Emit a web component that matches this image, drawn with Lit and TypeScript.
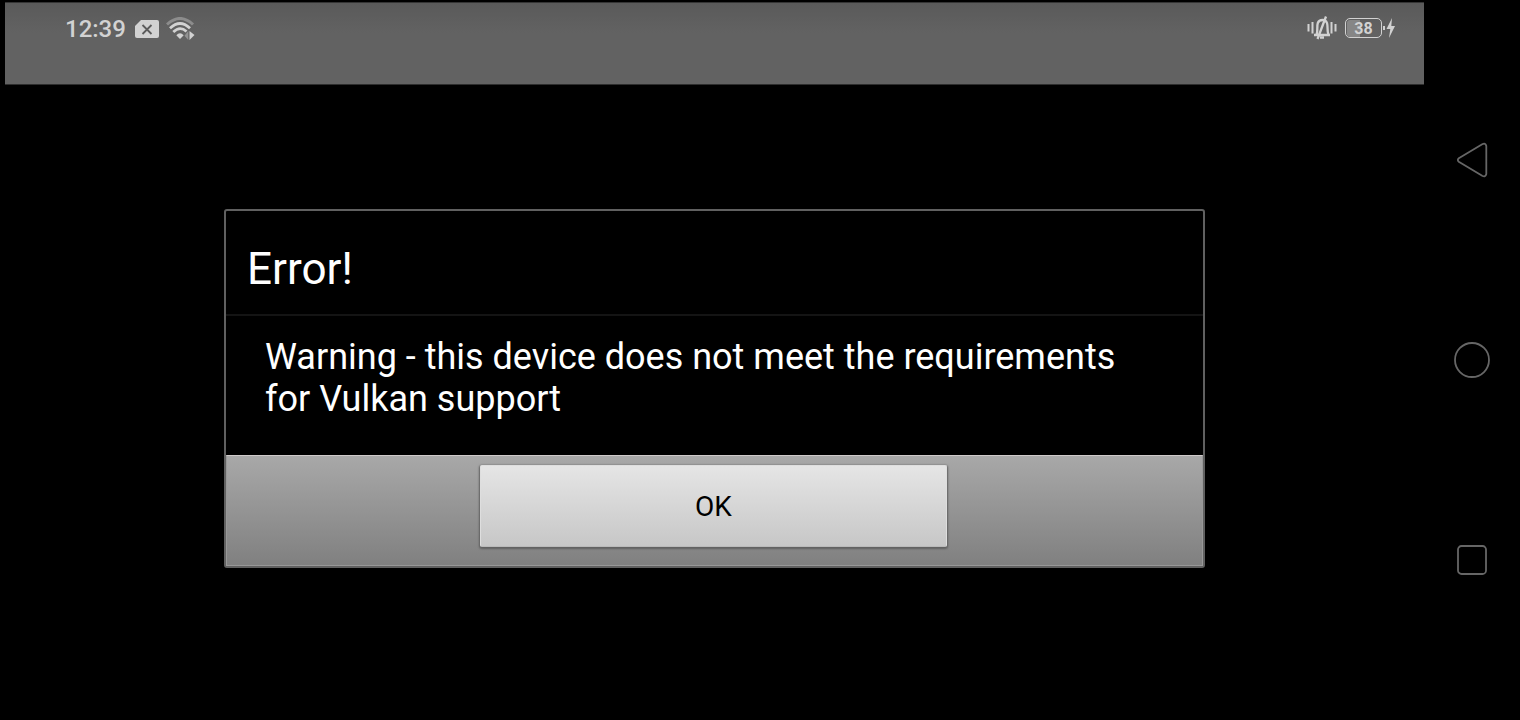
import { LitElement, html, css } from "lit";
import { customElement, property, state } from "lit/decorators.js";

@customElement("status-bar")
class StatusBar extends LitElement {
  @property() time = "";
  @property({ type: Number }) battery = 0;

  static styles = css`
    :host {
      display: flex;
      justify-content: space-between;
      align-items: flex-start;
      box-sizing: border-box;
      height: 83px;
      padding: 12px 29px 0 60px;
      background: linear-gradient(#5a5a5a, #626262 30px);
      border-top: 1px solid #353535;
      border-bottom: 1px solid #2e2e2e;
      color: #d2d2d2;
    }
    .group {
      display: flex;
      align-items: center;
      height: 28px;
    }
    .group.system {
      height: 26px;
    }
    .time {
      font-size: 24px;
      font-weight: 500;
      line-height: 28px;
      margin-right: 9px;
    }
    .sim {
      margin-right: 7px;
    }
    .bell {
      margin-right: 8px;
    }
    .battery {
      box-sizing: border-box;
      width: 37px;
      height: 20px;
      border: 1px solid #d2d2d2;
      border-radius: 5px;
      padding: 1px;
      display: grid;
    }
    .level,
    .percent {
      grid-area: 1 / 1;
    }
    .level {
      background: #868686;
      border-radius: 3px 0 0 3px;
    }
    .percent {
      font-size: 16px;
      font-weight: 700;
      line-height: 17px;
      text-align: center;
    }
    svg {
      display: block;
    }
  `;

  render() {
    return html`
      <div class="group">
        <span class="time">${this.time}</span>
        <svg class="sim" width="24" height="18" viewBox="0 0 24 18" aria-hidden="true">
          <path d="M6 0H22Q24 0 24 2V16Q24 18 22 18H2Q0 18 0 16V6Z" fill="#d2d2d2" />
          <path d="M7.5 5L16.5 14M16.5 5L7.5 14" stroke="#5c5c5c" stroke-width="1.8" />
        </svg>
        <svg width="30" height="24" viewBox="0 0 30 24" fill="none" aria-hidden="true">
          <path d="M1 7.5Q14 -4.5 27 7.5" stroke="#8c8c8c" stroke-width="3" />
          <path d="M4 11.2Q14 1.8 24 11.2" stroke="#d2d2d2" stroke-width="2.8" />
          <path d="M7.3 15Q14 8.5 20.5 14.5" stroke="#d2d2d2" stroke-width="2.8" />
          <path d="M10.3 18.2Q14 14.500 17.7 18.2L14 22Z" fill="#d2d2d2" />
          <path d="M22.3 14V23L18.5 18.8Z" fill="#929292" />
          <path d="M23.5 14V23L28.5 18Z" fill="#d2d2d2" />
        </svg>
      </div>
      <div class="group system">
        <svg class="bell" width="30" height="24" viewBox="0 0 30 24" fill="none" stroke="#d2d2d2" stroke-width="2" aria-hidden="true">
          <path d="M1.5 8V15.5M28.5 8V15.5M5.5 6V17.5M24.500 6V17.5" />
          <path d="M7 19H23M9.500 18.5C11 16 9.7 10 10.800 7Q12 4 15.5 4T20 7C21 10 20 16 21.500 18.5" stroke-width="2.3" />
          <path d="M13 21.5H17M19 .5L10.5 23" stroke-width="2.3" />
        </svg>
        <div class="battery">
          <span class="level" style="width:${this.battery}%"></span>
          <span class="percent">${this.battery}</span>
        </div>
        <svg width="13" height="22" viewBox="0 0 13 22" aria-hidden="true">
          <path d="M1 9H3V13H1ZM10 1L4.5 12H8.3L7 21L13 9H9.3Z" fill="#d2d2d2" />
        </svg>
      </div>
    `;
  }
}

@customElement("nav-keys")
class NavKeys extends LitElement {
  static styles = css`
    :host {
      display: flex;
      flex-direction: column;
      justify-content: center;
      width: 96px;
    }
    button {
      display: grid;
      place-items: center;
      height: 200px;
      padding: 0;
      border: 0;
      background: none;
    }
    svg {
      fill: none;
      stroke: #666;
      stroke-width: 1.8;
    }
  `;

  render() {
    return html`
      <button aria-label="Back">
        <svg width="40" height="40" viewBox="0 0 40 40">
          <path d="M6.8 18.3L30.2 4.3Q33.5 2.500 34.3 6V34Q33.5 37.5 30.2 35.7L6.8 21.7Q4.800 20 6.8 18.3Z" />
        </svg>
      </button>
      <button aria-label="Home">
        <svg width="40" height="40" viewBox="0 0 40 40"><circle cx="20" cy="20" r="17" /></svg>
      </button>
      <button aria-label="Recent apps">
        <svg width="40" height="40" viewBox="0 0 40 40">
          <rect x="6" y="6" width="28" height="28" rx="3.5" />
        </svg>
      </button>
    `;
  }
}

@customElement("alert-dialog")
class AlertDialog extends LitElement {
  @property() heading = "";
  @property() message = "";

  static styles = css`
    :host {
      display: block;
      box-sizing: border-box;
      border: 2px solid #606060;
      border-radius: 3px;
      background: #000;
      color: #fff;
    }
    h1 {
      margin: 0;
      padding: 32px 21px 19px;
      font-size: 44px;
      font-weight: 400;
      line-height: 52px;
      border-bottom: 2px solid #141414;
    }
    p {
      margin: 0;
      padding: 20px 39px 35px;
      font-size: 36px;
      line-height: 42px;
    }
    .actions {
      display: flex;
      justify-content: center;
      padding: 9px 22px 18px 20px;
      background: linear-gradient(#a8a8a8, #808080);
      border: 1px solid #989898;
      border-top-color: #cfcaca;
    }
    button {
      width: 50%;
      height: 82px;
      padding: 2px 0 0;
      border: 1px solid #dedede;
      border-bottom-color: #bababa;
      border-radius: 2px;
      background: linear-gradient(#e5e5e5, #c7c7c7);
      box-shadow: 0 1px 2px 1px #606060;
      color: #000;
      font-family: inherit;
      font-size: 28px;
      line-height: 32px;
    }
  `;

  private close() {
    this.dispatchEvent(new CustomEvent("dismiss"));
  }

  render() {
    return html`
      <h1>${this.heading}</h1>
      <p>${this.message}</p>
      <div class="actions"><button @click=${this.close}>OK</button></div>
    `;
  }
}

@customElement("app-root")
class AppRoot extends LitElement {
  @state() private open = true;

  static styles = css`
    :host {
      display: flex;
      min-height: 100vh;
      background: #000;
      font-family: Roboto, sans-serif;
    }
    .screen {
      flex: 1;
      min-width: 0;
      padding: 2px 0 0 5px;
    }
    alert-dialog {
      max-width: 981px;
      margin: 124px auto 0;
    }
  `;

  render() {
    return html`
      <main class="screen">
        <status-bar time="12:39" battery="38"></status-bar>
        ${this.open
          ? html`<alert-dialog
              role="alertdialog"
              heading="Error!"
              message="Warning - this device does not meet the requirements for Vulkan support"
              @dismiss=${() => (this.open = false)}
            ></alert-dialog>`
          : null}
      </main>
      <nav-keys></nav-keys>
    `;
  }
}
